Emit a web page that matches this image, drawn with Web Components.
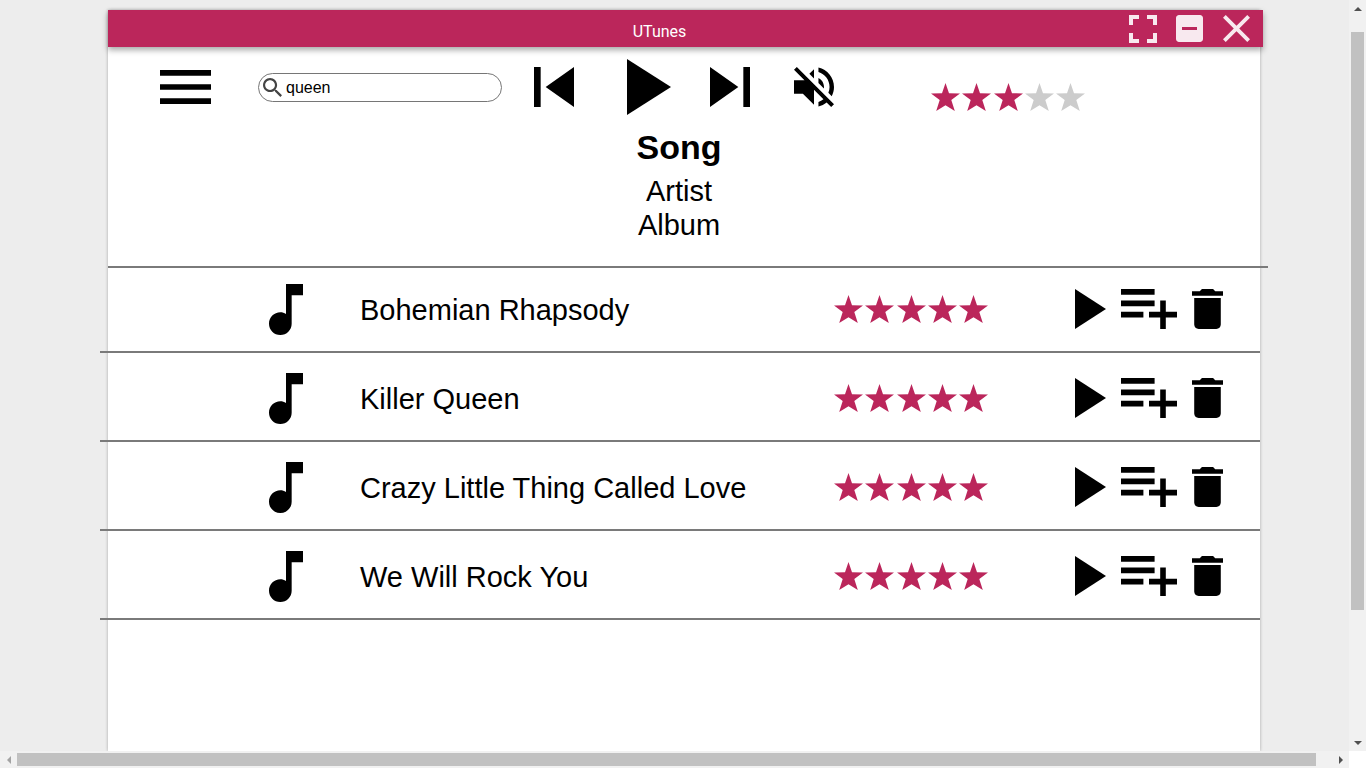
<!DOCTYPE html>
<html lang="en">
<head>
<meta charset="UTF-8">
<meta name="viewport" content="width=device-width, initial-scale=1">
<title>UTunes</title>
<style>
  * { box-sizing: border-box; }
  html, body { height: 100%; }
  body {
    margin: 0;
    overflow: hidden;
    background: #ededed;
    color: #000;
    font-family: "Liberation Sans", Arial, sans-serif;
    --accent: #bb265b;
    --muted: #ccc;
    --rule: #7a7a7a;
  }
</style>
</head>
<body>
<scroll-frame>
  <app-window>
    <title-bar slot="bar">UTunes</title-bar>
    <player-bar></player-bar>
    <now-playing>
      <span slot="song">Song</span>
      <span slot="artist">Artist</span>
      <span slot="album">Album</span>
    </now-playing>
    <song-list>
      <song-row rating="5">Bohemian Rhapsody</song-row>
      <song-row rating="5">Killer Queen</song-row>
      <song-row rating="5">Crazy Little Thing Called Love</song-row>
      <song-row rating="5">We Will Rock You</song-row>
    </song-list>
  </app-window>
</scroll-frame>

<script>
const ICONS = {
  menu: ['3 6 18 12', 'M3 18h18v-2H3v2zm0-5h18v-2H3v2zm0-7v2h18V6H3z'],
  search: ['3 3 17.5 17.5', 'M15.5 14h-.79l-.28-.27C15.41 12.59 16 11.11 16 9.5 16 5.91 13.09 3 9.5 3S3 5.91 3 9.5 5.91 16 9.5 16c1.61 0 3.09-.59 4.23-1.57l.27.28v.79l5 4.99L20.49 19l-4.99-5zm-6 0C7.01 14 5 11.99 5 9.5S7.01 5 9.5 5 14 7.01 14 9.5 11.99 14 9.5 14z'],
  prev: ['6 6 12 12', 'M6 6h2v12H6zm3.5 6l8.5 6V6z'],
  play: ['8 5 11 14', 'M8 5v14l11-7z'],
  next: ['6 6 12 12', 'M6 18l8.5-6L6 6v12zM16 6v12h2V6h-2z'],
  mute: ['3 3 18 18', 'M16.5 12c0-1.77-1.02-3.29-2.5-4.03v2.21l2.45 2.45c.03-.2.05-.41.05-.63zm2.5 0c0 .94-.2 1.82-.54 2.64l1.51 1.51C20.63 14.91 21 13.5 21 12c0-4.28-2.99-7.86-7-8.77v2.06c2.89.86 5 3.54 5 6.71zM4.27 3L3 4.27 7.73 9H3v6h4l5 5v-6.73l4.25 4.25c-.67.52-1.42.93-2.25 1.18v2.06c1.38-.31 2.63-.95 3.69-1.81L19.73 21 21 19.73l-9-9L4.27 3zM12 4L9.91 6.09 12 8.18V4z'],
  fullscreen: ['5 5 14 14', 'M7 14H5v5h5v-2H7v-3zm-2-4h2V7h3V5H5v5zm12 7h-3v2h5v-5h-2v3zM14 5v2h3v3h2V5h-5z'],
  minimize: ['3 3 18 18', 'M19 3H5c-1.1 0-2 .9-2 2v14c0 1.1.9 2 2 2h14c1.1 0 2-.9 2-2V5c0-1.1-.9-2-2-2zm-2 10H7v-2h10v2z'],
  close: ['5 5 14 14', 'M19 6.41L17.59 5 12 10.59 6.41 5 5 6.41 10.59 12 5 17.59 6.41 19 12 13.41 17.59 19 19 17.59 13.41 12z'],
  note: ['6 3 12 18', 'M12 3v10.55c-.59-.34-1.27-.55-2-.55-2.21 0-4 1.79-4 4s1.79 4 4 4 4-1.79 4-4V7h4V3h-6z'],
  queue: ['2 6 20 14', 'M14 10H2v2h12v-2zm0-4H2v2h12V6zm4 8v-4h-2v4h-4v2h4v4h2v-4h4v-2h-4zM2 16h8v-2H2v2z'],
  trash: ['5 3 14 18', 'M6 19c0 1.1.9 2 2 2h8c1.1 0 2-.9 2-2V7H6v12zM19 4h-3.5l-1-1h-5l-1 1H5v2h14V4z'],
  star: ['0 0 29 28', 'M14.5 0L18 10.2 29 10.5 20.3 17.1 23.8 28 14.5 22.2 5.2 28 8.7 17.1 0 10.5 11 10.2z']
};

function icon(name, width, height) {
  const [box, path] = ICONS[name];
  return `<svg width="${width}" height="${height}" viewBox="${box}" preserveAspectRatio="none" aria-hidden="true"><path d="${path}"/></svg>`;
}

const base = `
  * { box-sizing: border-box; }
  svg { display: block; fill: currentColor; }
  button {
    display: flex;
    align-items: center;
    justify-content: center;
    padding: 0;
    border: 0;
    background: none;
    color: inherit;
    cursor: pointer;
  }
`;

class ScrollFrame extends HTMLElement {
  connectedCallback() {
    this.attachShadow({ mode: 'open' });
    this.shadowRoot.innerHTML = `
      <style>
        ${base}
        :host {
          display: grid;
          grid-template: 1fr 17px / 1fr 17px;
          height: 100vh;
        }
        .view {
          display: flex;
          overflow: hidden;
        }
        .track {
          display: flex;
          align-items: center;
          background: #f1f1f1;
          color: #505050;
        }
        .track.down { flex-direction: column; }
        .track span {
          display: flex;
          align-items: center;
          justify-content: center;
          width: 17px;
          height: 17px;
        }
        .track .off { color: #a3a3a3; }
        .thumb { background: #c1c1c1; }
        .down .thumb {
          width: 13px;
          flex: 578;
          margin-top: 15px;
        }
        .across .thumb {
          height: 13px;
          flex: 1299;
        }
        .down .rest { flex: 124; }
        .across .rest { flex: 16; }
        .corner { background: #fff; }
      </style>
      <div class="view"><slot></slot></div>
      <div class="track down" aria-hidden="true">
        <span><svg width="8" height="4"><path d="M0 4L4 0l4 4z"/></svg></span>
        <div class="thumb"></div>
        <div class="rest"></div>
        <span><svg width="8" height="4"><path d="M0 0h8L4 4z"/></svg></span>
      </div>
      <div class="track across" aria-hidden="true">
        <span class="off"><svg width="4" height="8"><path d="M4 0v8L0 4z"/></svg></span>
        <div class="thumb"></div>
        <div class="rest"></div>
        <span><svg width="4" height="8"><path d="M0 0l4 4-4 4z"/></svg></span>
      </div>
      <div class="corner"></div>
    `;
  }
}

class AppWindow extends HTMLElement {
  connectedCallback() {
    this.attachShadow({ mode: 'open' });
    this.shadowRoot.innerHTML = `
      <style>
        :host {
          display: flex;
          flex: 1;
          flex-direction: column;
          margin: 10px 89px 0 108px;
          background: #fff;
          box-shadow: 0 0 3px rgba(0, 0, 0, .3);
        }
        main { display: block; }
      </style>
      <slot name="bar"></slot>
      <main><slot></slot></main>
    `;
  }
}

class TitleBar extends HTMLElement {
  connectedCallback() {
    this.attachShadow({ mode: 'open' });
    this.shadowRoot.innerHTML = `
      <style>
        ${base}
        :host {
          display: flex;
          align-items: center;
          height: 37px;
          margin-right: -3px;
          padding: 0 3px 0 92px;
          background: var(--accent);
          box-shadow: 0 3px 6px rgba(0, 0, 0, .35);
          color: #fff;
          font: 16px/20px Roboto, sans-serif;
        }
        h1 {
          flex: 1;
          margin: 0;
          padding-top: 6px;
          font: inherit;
          text-align: center;
        }
        button {
          width: 47px;
          height: 37px;
          color: #f8e9ef;
        }
      </style>
      <h1><slot></slot></h1>
      <button aria-label="Full screen">${icon('fullscreen', 28, 28)}</button>
      <button aria-label="Minimize">${icon('minimize', 27, 27)}</button>
      <button aria-label="Close">${icon('close', 27, 27)}</button>
    `;
  }
}

class StarRating extends HTMLElement {
  connectedCallback() {
    const value = Number(this.getAttribute('value'));
    const stars = [1, 2, 3, 4, 5].map(n =>
      `<button class="${n <= value ? 'on' : ''}" aria-label="${n} of 5 stars">${icon('star', 29, 28)}</button>`
    ).join('');
    this.attachShadow({ mode: 'open' });
    this.shadowRoot.innerHTML = `
      <style>
        ${base}
        :host {
          display: flex;
          justify-content: space-between;
          width: 154px;
        }
        button { color: var(--muted); }
        .on { color: var(--accent); }
      </style>
      ${stars}
    `;
  }
}

class PlayerBar extends HTMLElement {
  connectedCallback() {
    this.attachShadow({ mode: 'open' });
    this.shadowRoot.innerHTML = `
      <style>
        ${base}
        :host {
          display: flex;
          align-items: center;
          height: 80px;
          padding-left: 52px;
        }
        .search {
          display: flex;
          align-items: center;
          gap: 4px;
          width: 244px;
          height: 29px;
          margin: 0 12px 0 47px;
          padding: 0 12px 0 4px;
          border: 1px solid #767676;
          border-radius: 15px;
        }
        .search svg { fill: #444; }
        input {
          flex: 1;
          min-width: 0;
          padding: 2px 0 0;
          border: 0;
          outline: 0;
          background: none;
          color: #000;
          font: 16px/20px "Liberation Sans", Arial, sans-serif;
        }
        .skip { width: 80px; height: 80px; }
        .play {
          width: 96px;
          height: 80px;
          padding-left: 13px;
        }
        .mute { width: 88px; height: 80px; }
        star-rating { margin: 20px 0 0 73px; }
      </style>
      <button aria-label="Menu">${icon('menu', 51, 34)}</button>
      <label class="search">
        ${icon('search', 19, 19)}
        <input type="text" value="queen" aria-label="Search">
      </label>
      <button class="skip" aria-label="Previous">${icon('prev', 40, 40)}</button>
      <button class="play" aria-label="Play">${icon('play', 44, 56)}</button>
      <button class="skip" aria-label="Next">${icon('next', 40, 40)}</button>
      <button class="mute" aria-label="Mute">${icon('mute', 40, 40)}</button>
      <star-rating value="3"></star-rating>
    `;
  }
}

class NowPlaying extends HTMLElement {
  connectedCallback() {
    this.attachShadow({ mode: 'open' });
    this.shadowRoot.innerHTML = `
      <style>
        :host {
          display: block;
          margin-right: -8px;
          padding-bottom: 24px;
          border-bottom: 2px solid var(--rule);
        }
        div {
          padding-right: 18px;
          text-align: center;
        }
        h2, p {
          margin: 0;
          font-size: 29px;
          line-height: 34px;
          font-weight: normal;
        }
        h2 {
          margin-bottom: 7px;
          font-size: 34px;
          line-height: 40px;
          font-weight: bold;
        }
      </style>
      <div>
        <h2><slot name="song"></slot></h2>
        <p><slot name="artist"></slot></p>
        <p><slot name="album"></slot></p>
      </div>
    `;
  }
}

class SongList extends HTMLElement {
  connectedCallback() {
    this.attachShadow({ mode: 'open' });
    this.shadowRoot.innerHTML = `
      <style>
        :host {
          display: flex;
          flex-direction: column;
          margin: -4px 0 0 -8px;
        }
      </style>
      <slot></slot>
    `;
  }
}

class SongRow extends HTMLElement {
  connectedCallback() {
    this.attachShadow({ mode: 'open' });
    this.shadowRoot.innerHTML = `
      <style>
        ${base}
        :host {
          display: flex;
          align-items: center;
          height: 89px;
          padding: 2px 37px 0 169px;
          border-bottom: 2px solid var(--rule);
        }
        .note { padding-top: 2px; }
        .title {
          flex: 1;
          margin-left: 57px;
          padding-top: 2px;
          font-size: 29px;
          line-height: 34px;
        }
        .actions {
          display: flex;
          gap: 15px;
          margin-left: 87px;
        }
      </style>
      <span class="note">${icon('note', 34, 51)}</span>
      <span class="title"><slot></slot></span>
      <star-rating value="${this.getAttribute('rating')}"></star-rating>
      <div class="actions">
        <button aria-label="Play song">${icon('play', 31, 40)}</button>
        <button aria-label="Add to playlist">${icon('queue', 56, 40)}</button>
        <button aria-label="Delete song">${icon('trash', 31, 40)}</button>
      </div>
    `;
  }
}

customElements.define('scroll-frame', ScrollFrame);
customElements.define('app-window', AppWindow);
customElements.define('title-bar', TitleBar);
customElements.define('star-rating', StarRating);
customElements.define('player-bar', PlayerBar);
customElements.define('now-playing', NowPlaying);
customElements.define('song-list', SongList);
customElements.define('song-row', SongRow);
</script>
</body>
</html>
